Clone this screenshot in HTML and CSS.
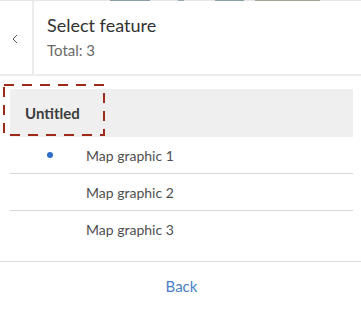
FILE: index.html
```html
<!DOCTYPE html>
<html>
<head>
<meta charset="utf-8">
<link rel="stylesheet" href="styles.css">
</head>
<body>
<div class="panel">
  <div class="mapstrip"></div>
  <div class="header">
    <div class="back-col">
      <svg class="chev" width="6" height="10" viewBox="0 0 6 10"><path d="M5 1 L1 5 L5 9" fill="none" stroke="#555" stroke-width="1"/></svg>
    </div>
    <div class="titles">
      <div class="title">Select feature</div>
      <div class="subtitle">Total: 3</div>
    </div>
  </div>
  <div class="content">
    <div class="group">
      <div class="group-header">
        <span class="group-title">Untitled</span>
        <svg class="focus" width="102" height="52" viewBox="0 0 102 52"><rect x="1" y="1" width="100" height="50" fill="none" stroke="#9e2a1b" stroke-width="2" stroke-dasharray="10 8"/></svg>
      </div>
      <div class="item"><span class="dot-col"><span class="dot"></span></span><span class="label">Map graphic 1</span></div>
      <div class="item"><span class="dot-col"></span><span class="label">Map graphic 2</span></div>
      <div class="item last"><span class="dot-col"></span><span class="label">Map graphic 3</span></div>
    </div>
  </div>
  <div class="footer"><span class="back-link">Back</span></div>
</div>
</body>
</html>
```

FILE: styles.css
```css
html, body {
  margin: 0;
  padding: 0;
  background: #ffffff;
}
body {
  font-family: Lato, "Noto Sans", sans-serif;
  width: 361px;
  height: 310px;
  overflow: hidden;
}
.panel {
  display: flex;
  flex-direction: column;
  height: 310px;
}
.mapstrip {
  height: 1px;
  background: linear-gradient(to right,
    #e6e6e6 0, #e6e6e6 110px,
    #8a9ea6 110px, #8a9ea6 150px,
    #e6e6e6 150px, #e6e6e6 178px,
    #9aaab0 178px, #9aaab0 184px,
    #e6e6e6 184px, #e6e6e6 215px,
    #8a9ea6 215px, #8a9ea6 244px,
    #e6e6e6 244px, #e6e6e6 255px,
    #a8a598 255px, #a8a598 320px,
    #e6e6e6 320px);
}
.header {
  display: flex;
  height: 73px;
  border-bottom: 2px solid #ececec;
}
.back-col {
  width: 32px;
  border-right: 2px solid #ececec;
  display: flex;
  align-items: center;
  justify-content: center;
}
.chev {
  margin-top: 2px;
  margin-left: -3px;
}
.titles {
  padding: 12px 0 0 13px;
}
.title {
  font-size: 18px;
  line-height: 24px;
  color: #323232;
}
.subtitle {
  margin-top: 3px;
  font-size: 15px;
  line-height: 20px;
  color: #6a6a6a;
}
.content {
  flex: 1;
  padding: 13px 8px 0 10px;
}
.group-header {
  position: relative;
  height: 48px;
  background: #efefef;
  display: flex;
  align-items: center;
  padding-left: 15px;
}
.group-title {
  font-size: 15px;
  font-weight: 700;
  color: #3c3c3c;
}
.focus {
  position: absolute;
  left: -7px;
  top: -5px;
}
.item {
  display: flex;
  align-items: center;
  height: 36px;
  border-bottom: 1px solid #d8d8d8;
}
.item.last {
  border-bottom: none;
}
.dot-col {
  width: 76px;
  display: flex;
  padding-left: 37px;
  box-sizing: border-box;
}
.dot {
  width: 6px;
  height: 6px;
  border-radius: 50%;
  background: #2f6ec8;
}
.label {
  font-size: 14px;
  color: #4e4e4e;
}
.footer {
  height: 48px;
  border-top: 1px solid #dcdcdc;
  display: flex;
  align-items: center;
  justify-content: center;
}
.back-link {
  font-size: 15px;
  color: #4a7fc3;
  margin-left: 2px;
}
```
